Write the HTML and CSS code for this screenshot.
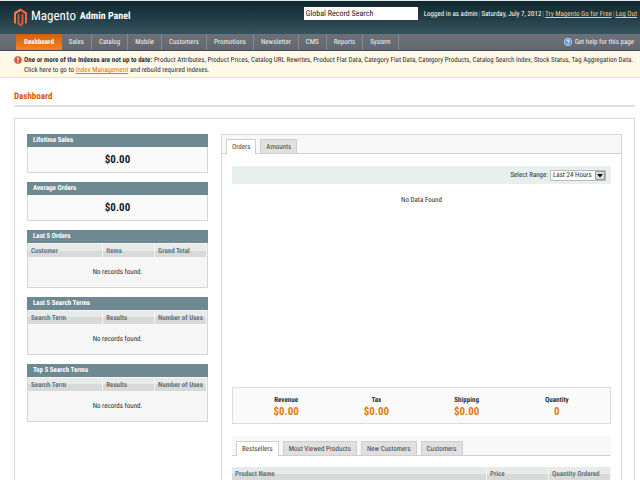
FILE: index.html
```
<!DOCTYPE html>
<html lang="en">
<head>
<meta charset="utf-8">
<title>Dashboard / Magento Admin</title>
<link rel="stylesheet" href="styles.css">
</head>
<body>
<header class="header">
  <a class="brand" href="#">
    <svg class="brand-mark" viewBox="0 0 26 36" aria-hidden="true">
      <path fill="#ee6a3c" d="M13 0 26 8v20l-4 3V11l-9-6-9 6v20l-4-3V8z"/>
      <path fill="#e0562c" d="M7 12l4-2v19l2 2 2-2V10l4 2v19l-6 5-6-5z"/>
      <path fill="#f58a5c" d="M13 0v5l-9 6v20l-4-3V8z" opacity=".5"/>
    </svg>
    <span class="brand-name">Magento<sup>·</sup></span>
    <span class="brand-sub">Admin Panel</span>
  </a>
  <form class="search">
    <input type="text" value="Global Record Search" aria-label="Global Record Search">
  </form>
  <p class="account">
    <span>Logged in as admin</span><i>|</i><span>Saturday, July 7, 2012</span><i>|</i><a href="#">Try Magento Go for Free</a><i>|</i><a href="#">Log Out</a>
  </p>
</header>
<nav class="nav">
  <ul class="menu">
    <li class="active"><a href="#">Dashboard</a></li>
    <li><a href="#">Sales</a></li>
    <li><a href="#">Catalog</a></li>
    <li><a href="#">Mobile</a></li>
    <li><a href="#">Customers</a></li>
    <li><a href="#">Promotions</a></li>
    <li><a href="#">Newsletter</a></li>
    <li><a href="#">CMS</a></li>
    <li><a href="#">Reports</a></li>
    <li><a href="#">System</a></li>
  </ul>
  <a class="help" href="#">
    <svg viewBox="0 0 16 16" aria-hidden="true"><circle cx="8" cy="8" r="8" fill="#d5e6f6"/><circle cx="8" cy="8" r="7" fill="#5f98d4"/><path d="M5.500 6.500c0-4 5-3.500 5-.5 0 2-2.500 2-2.500 4M8 11v2" stroke="#fff" stroke-width="2" fill="none"/></svg>
    Get help for this page</a>
</nav>
<div class="notice">
  <svg viewBox="0 0 16 16" aria-hidden="true"><circle cx="8" cy="8" r="8" fill="#e39a86"/><circle cx="8" cy="8" r="7" fill="#d55a46"/><path d="M8 3v6M8 11v2" stroke="#fff" stroke-width="2.500"/></svg>
  <p><strong>One or more of the Indexes are not up to date:</strong> Product Attributes, Product Prices, Catalog URL Rewrites, Product Flat Data, Category Flat Data, Category Products, Catalog Search Index, Stock Status, Tag Aggregation Data. Click here to go to <a href="#">Index Management</a> and rebuild required indexes.</p>
</div>
<main class="main">
  <h1>Dashboard</h1>
  <div class="dashboard">
    <div class="side">
      <section class="box"><h2>Lifetime Sales</h2><p class="amount">$0.00</p></section>
      <section class="box"><h2>Average Orders</h2><p class="amount">$0.00</p></section>
      <section class="box"><h2>Last 5 Orders</h2>
        <table class="grid side-grid">
          <thead><tr><th>Customer</th><th>Items</th><th>Grand Total</th></tr></thead>
          <tbody><tr><td colspan="3">No records found.</td></tr></tbody>
        </table>
      </section>
      <section class="box"><h2>Last 5 Search Terms</h2>
        <table class="grid side-grid">
          <thead><tr><th>Search Term</th><th>Results</th><th>Number of Uses</th></tr></thead>
          <tbody><tr><td colspan="3">No records found.</td></tr></tbody>
        </table>
      </section>
      <section class="box"><h2>Top 5 Search Terms</h2>
        <table class="grid side-grid">
          <thead><tr><th>Search Term</th><th>Results</th><th>Number of Uses</th></tr></thead>
          <tbody><tr><td colspan="3">No records found.</td></tr></tbody>
        </table>
      </section>
    </div>
    <section class="panel">
      <div class="tabs panel-tabs">
        <button class="tab current" type="button">Orders</button>
        <button class="tab" type="button">Amounts</button>
      </div>
      <div class="panel-body">
        <div class="range">
          <label for="range">Select Range:</label>
          <span class="select"><select id="range"><option>Last 24 Hours</option></select><svg viewBox="0 0 10 9" aria-hidden="true"><path fill="#dcdcdc" stroke="#999" d="M.5.5h9v8h-9z"/><path fill="#111" d="M2 3h6L5 6.500z"/></svg></span>
        </div>
        <p class="chart">No Data Found</p>
        <dl class="totals">
          <div><dt>Revenue</dt><dd>$0.00</dd></div>
          <div><dt>Tax</dt><dd>$0.00</dd></div>
          <div><dt>Shipping</dt><dd>$0.00</dd></div>
          <div><dt>Quantity</dt><dd>0</dd></div>
        </dl>
        <div class="tabs list-tabs">
          <button class="tab current" type="button">Bestsellers</button>
          <button class="tab" type="button">Most Viewed Products</button>
          <button class="tab" type="button">New Customers</button>
          <button class="tab" type="button">Customers</button>
        </div>
        <table class="grid wide-grid">
          <thead><tr><th>Product Name</th><th>Price</th><th>Quantity Ordered</th></tr></thead>
        </table>
      </div>
    </section>
  </div>
</main>
</body>
</html>
```
FILE: styles.css
```
* { box-sizing: border-box; }
body, h1, h2, p, ul, dl, dd { margin: 0; padding: 0; }
body {
  height: 100vh;
  overflow: hidden;
  background: #fff;
  color: #2f2f2f;
  font: 7px/10px "Roboto Condensed", Roboto, "Liberation Sans", Arial, sans-serif;
  text-rendering: geometricPrecision;
}
button, input, select { font: inherit; color: inherit; margin: 0; text-rendering: inherit; }

.header {
  display: flex;
  align-items: flex-start;
  height: 34px;
  padding: 0 3px 0 14px;
  border-top: 1px solid #dfe9e9;
  background: linear-gradient(#10262d, #35535e);
  color: #fff;
}
.brand { display: flex; align-items: center; flex: 1; height: 32px; color: #fff; text-decoration: none; }
.brand-mark { width: 13px; height: 19px; margin-right: 4px; }
.brand-name { font-size: 13px; }
.brand-name sup { font-size: 7px; line-height: 0; }
.brand-sub { font-size: 10px; font-weight: bold; margin-left: 2px; }
.search { margin: 6px 6px 0 0; }
.search input {
  display: block;
  width: 114px;
  height: 13px;
  padding: 0 2px;
  border: 0;
  background: #fff;
  color: #222;
  font-size: 8px;
}
.account { display: flex; margin-top: 8px; white-space: nowrap; }
.account i { margin: 0 1px; color: #88989e; font-style: normal; }
.account a { color: #f0cc80; }

.nav {
  display: flex;
  justify-content: space-between;
  height: 17px;
  padding: 0 6px 0 16px;
  background: linear-gradient(#6d7078, #63676f);
  border-bottom: 1px solid #444950;
}
.menu { display: flex; list-style: none; }
.menu a {
  display: block;
  padding: 0 7px;
  border-right: 1px solid #858992;
  color: #f0f0f0;
  line-height: 16px;
  text-decoration: none;
}
.menu .active a { padding: 0 8px; border: 0; background: linear-gradient(#d4600f, #f58220); color: #fff; font-weight: bold; }
.help { display: flex; align-items: center; gap: 3px; color: #f0f0f0; text-decoration: none; }
.help svg { width: 8px; height: 8px; }

.notice {
  display: flex;
  gap: 2px;
  min-height: 27px;
  padding: 4px 4px 2px 14px;
  background: #fff9e9;
  border-bottom: 1px solid #eee2be;
}
.notice svg { flex: none; width: 8px; height: 10px; }
.notice a { color: #ea7601; }

.main { padding: 14px 5px 0 14px; }
h1 { padding-bottom: 3px; border-bottom: 2px solid #dfdfdf; color: #d85909; font-size: 9px; line-height: 10px; }
.dashboard {
  display: flex;
  align-items: flex-start;
  gap: 13px;
  margin-top: 11px;
  padding: 15px 12px;
  border: 1px solid #d8d8d8;
}
.side { display: flex; flex-direction: column; gap: 9px; width: 181px; }
.box { border: 1px solid #d6d6d6; border-top: 0; background: #fafafa; }
.box h2 { margin: 0 -1px; padding: 0 6px; background: #6f8992; color: #fff; font-size: 7px; line-height: 13px; }
.amount { color: #1c1c1c; font-size: 11px; font-weight: bold; line-height: 25px; text-align: center; }

.grid { width: 100%; border-spacing: 0; table-layout: fixed; }
.grid th {
  height: 13px;
  padding: 0 3px;
  border-right: 1px solid #f6f6f6;
  background: linear-gradient(#e8eaea 50%, #d8dada 50%);
  color: #67767e;
  font-weight: bold;
  text-align: left;
  white-space: nowrap;
}
.side-grid th { border-top: 1px solid #f6f6f6; height: 14px; }
.side-grid td { height: 30px; padding: 0; background: #f6f6f6; text-align: center; }
.side-grid th:first-child { width: 42%; }
.side-grid th:nth-child(2) { width: 29%; }

.panel { flex: 1; border: 1px solid #d8d8d8; }
.tabs { display: flex; align-items: flex-end; gap: 4px; padding: 0 4px; border-bottom: 1px solid #cfcfcf; background: #f8f8f8; }
.panel-tabs { height: 19px; }
.list-tabs { height: 20px; margin-top: 12px; }
.tab { height: 14px; padding: 0 5px; border: 1px solid #cfcfcf; border-bottom: 0; background: #e0e0e0; color: #444; }
.tab.current { margin-bottom: -1px; height: 15px; background: #fff; }
.panel-body { padding: 12px 10px 0; }
.range { display: flex; justify-content: flex-end; align-items: center; gap: 2px; height: 18px; padding-right: 5px; background: #e7efef; }
.select { position: relative; }
.select select {
  display: block;
  height: 11px;
  width: 56px;
  padding: 0 2px;
  border: 1px solid #b8bcbc;
  border-radius: 0;
  background: #fff;
  appearance: none;
  line-height: 9px;
}
.select svg { position: absolute; top: 1px; right: 1px; width: 10px; height: 9px; pointer-events: none; }
.chart { height: 203px; padding-top: 11px; text-align: center; }
.totals {
  display: grid;
  grid-template-columns: repeat(4, 1fr);
  height: 37px;
  padding: 7px 8px 0;
  border: 1px solid #dcdcdc;
  background: #fafafa;
  text-align: center;
  font-weight: bold;
}
.totals dd { color: #df7b10; font-size: 11px; line-height: 13px; }
.wide-grid { margin-top: 11px; }
.wide-grid th { height: 14px; }
.wide-grid th:nth-child(2), .wide-grid th:nth-child(3) { width: 62px; }
```
